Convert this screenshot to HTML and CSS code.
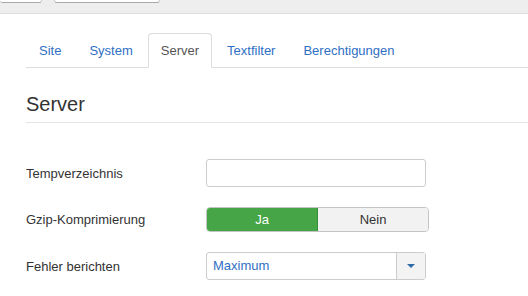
FILE: index.html
```html
<!DOCTYPE html>
<html lang="de">
<head>
    <meta charset="UTF-8">
    <title>Globale Konfiguration</title>
    <link rel="stylesheet" href="styles.css">
</head>
<body>
    <div class="toolbar">
        <span class="tool-btn small"></span>
        <span class="tool-btn wide"></span>
    </div>
    <div class="content">
        <ul class="tabs">
            <li><a href="#">Site</a></li>
            <li><a href="#">System</a></li>
            <li class="active"><a href="#">Server</a></li>
            <li><a href="#">Textfilter</a></li>
            <li><a href="#">Berechtigungen</a></li>
        </ul>
        <h2 class="section-title">Server</h2>
        <div class="form-row">
            <label class="field-label">Tempverzeichnis</label>
            <input type="text" class="text-input">
        </div>
        <div class="form-row">
            <label class="field-label">Gzip-Komprimierung</label>
            <div class="toggle">
                <span class="toggle-opt yes">Ja</span>
                <span class="toggle-opt no">Nein</span>
            </div>
        </div>
        <div class="form-row">
            <label class="field-label">Fehler berichten</label>
            <div class="select-box">
                <span class="select-value">Maximum</span>
                <span class="select-arrow"><span class="caret"></span></span>
            </div>
        </div>
    </div>
</body>
</html>
```

FILE: styles.css
```css
body {
    margin: 0;
    font-family: "Liberation Sans", Arial, sans-serif;
    font-size: 13px;
    color: #333;
    background: #fff;
}
.toolbar {
    height: 13px;
    background: #eee;
    border-bottom: 1px solid #ddd;
    display: flex;
    align-items: flex-start;
    gap: 12px;
}
.tool-btn {
    display: block;
    height: 2px;
    background: #fff;
    border-bottom: 1px solid #a9a9a9;
    border-left: 1px solid #ccc;
    border-right: 1px solid #ccc;
    border-radius: 0 0 3px 3px;
}
.tool-btn.small {
    width: 41px;
    border-left: none;
}
.tool-btn.wide {
    width: 104px;
}
.content {
    padding-left: 26px;
}
.tabs {
    list-style: none;
    margin: 19px 0 0;
    padding: 0;
    display: flex;
    border-bottom: 1px solid #ddd;
}
.tabs li {
    margin-right: 2px;
    margin-bottom: -1px;
}
.tabs a {
    display: block;
    padding: 8px 12px 7px;
    line-height: 18px;
    border: 1px solid transparent;
    border-radius: 4px 4px 0 0;
    color: #2f6fc4;
    text-decoration: none;
}
.tabs .active a {
    color: #555;
    border-color: #ddd;
    border-bottom-color: #fff;
    background: #fff;
}
.section-title {
    margin: 24px 0 0;
    padding-bottom: 6px;
    font-size: 20px;
    font-weight: normal;
    line-height: 24px;
    color: #333;
    border-bottom: 1px solid #e5e5e5;
}
.form-row {
    display: flex;
    align-items: center;
}
.form-row:nth-of-type(1) {
    margin-top: 36px;
}
.form-row + .form-row {
    margin-top: 20px;
}
.field-label {
    width: 180px;
}
.text-input {
    box-sizing: border-box;
    width: 220px;
    height: 28px;
    margin: 0;
    border: 1px solid #ccc;
    border-radius: 3px;
    font: inherit;
}
.toggle {
    display: flex;
    width: 223px;
    height: 25px;
    box-sizing: border-box;
    border: 1px solid #c4c4c4;
    border-radius: 4px;
    overflow: hidden;
}
.toggle-opt {
    flex: 1;
    display: flex;
    align-items: center;
    justify-content: center;
}
.toggle-opt.yes {
    background: #46a546;
    color: #fff;
    border-right: 1px solid #3a8f3a;
}
.toggle-opt.no {
    background: #f2f2f2;
    color: #333;
}
.select-box {
    box-sizing: border-box;
    display: flex;
    width: 220px;
    height: 28px;
    border: 1px solid #ccc;
    border-radius: 3px;
}
.select-value {
    flex: 1;
    padding-left: 6px;
    line-height: 26px;
    color: #2f6fc4;
}
.select-arrow {
    width: 28px;
    display: flex;
    align-items: center;
    justify-content: center;
    background: #f3f3f3;
    border-left: 1px solid #ccc;
}
.caret {
    width: 0;
    height: 0;
    border-left: 4px solid transparent;
    border-right: 4px solid transparent;
    border-top: 4px solid #2d6aa8;
}
```
